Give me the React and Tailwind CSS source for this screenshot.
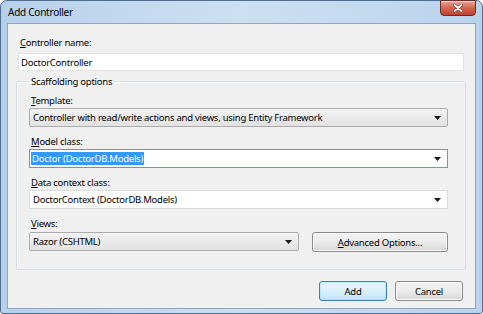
export default function App() {
  const font = "font-['Segoe_UI','Noto_Sans',sans-serif] text-[9.5px] tracking-[-0.25px] leading-[15px] text-black";

  const Arrow = () => (
    <svg width="7" height="4" viewBox="0 0 7 4" className="shrink-0">
      <path d="M0 0 H7 L3.5 4 Z" fill="#1a1a1a" />
    </svg>
  );

  return (
    <div className={`w-[483px] h-[314px] flex flex-col rounded-t-[7px] rounded-b-[3px] border border-[#4f6e91] bg-gradient-to-r from-[#b7d0ea] via-[#cde0f2] to-[#bad3ec] px-[6px] pb-[4px] ${font}`}>
      {/* title bar */}
      <div className="h-[22px] shrink-0 flex items-start justify-between">
        <span className="pl-[1px] pt-[4px] text-[10px]">Add Controller</span>
        <button className="w-[36px] h-[16px] -mt-[1px] flex items-center justify-center rounded-b-[4px] border border-[#6b2c24] bg-gradient-to-b from-[#e9a898] via-[#d26450] to-[#c2402c] shadow-[inset_0_1px_0_rgba(255,255,255,0.5)]">
          <svg width="10" height="8" viewBox="0 0 10 8">
            <path d="M1.5 1 L8.5 7 M8.5 1 L1.5 7" stroke="#7a3a30" strokeWidth="3" strokeLinecap="round" />
            <path d="M1.5 1 L8.5 7 M8.5 1 L1.5 7" stroke="#ffffff" strokeWidth="1.8" strokeLinecap="round" />
          </svg>
        </button>
      </div>

      {/* client area */}
      <div className="flex-1 flex flex-col bg-[#f0f0f0] border border-[#8ea7c3]">
        <div className="pl-[12px] pt-[11px]">
          <span className="underline">C</span>ontroller name:
        </div>
        <input
          readOnly
          value="DoctorController"
          className="mt-[3px] ml-[10px] mr-[11px] h-[18px] px-[2px] bg-white border border-[#e3e3e3] outline-none"
        />

        <fieldset className="mt-[3px] ml-[8px] mr-[9px] border border-[#d5dfe5] rounded-[2px] pl-[12px] pr-[17px] pb-[17px] shadow-[inset_1px_1px_0_#fff]">
          <legend className="ml-[1px] px-[1px]">Scaffolding options</legend>

          <div className="pl-[2px] mt-[4px]">
            <span className="underline">T</span>emplate:
          </div>
          <div className="h-[19px] flex items-center justify-between px-[3px] pr-[6px] border border-[#acacac] rounded-[2px] bg-gradient-to-b from-[#f2f2f2] to-[#e2e2e2]">
            <span>Controller with read/write actions and views, using Entity Framework</span>
            <Arrow />
          </div>

          <div className="pl-[2px] mt-[7px]">
            <span className="underline">M</span>odel class:
          </div>
          <div className="h-[19px] flex items-center justify-between pl-[1px] pr-[6px] border border-[#5b9bd9] bg-white">
            <span className="bg-[#3399ff] text-white px-[1px] leading-[13px]">Doctor (DoctorDB.Models)</span>
            <Arrow />
          </div>

          <div className="pl-[2px] mt-[7px]">
            <span className="underline">D</span>ata context class:
          </div>
          <div className="h-[19px] flex items-center justify-between px-[3px] pr-[6px] border border-[#dcdcdc] bg-white">
            <span>DoctorContext (DoctorDB.Models)</span>
            <Arrow />
          </div>

          <div className="pl-[2px] mt-[7px]">
            <span className="underline">V</span>iews:
          </div>
          <div className="flex items-center justify-between">
            <div className="w-[270px] h-[19px] flex items-center justify-between px-[3px] pr-[6px] border border-[#acacac] rounded-[2px] bg-gradient-to-b from-[#f2f2f2] to-[#e2e2e2]">
              <span>Razor (CSHTML)</span>
              <Arrow />
            </div>
            <button className="w-[136px] h-[20px] mt-[1px] border border-[#8a8a8a] rounded-[3px] bg-gradient-to-b from-[#f4f4f4] via-[#ebebeb] to-[#d6d6d6] shadow-[inset_0_0_0_1px_#fcfcfc]">
              <span className="underline">A</span>dvanced Options...
            </button>
          </div>
        </fieldset>

        <div className="mt-[11px] mr-[12px] flex justify-end gap-[8px]">
          <button className="w-[68px] h-[20px] border border-[#3c7fb1] rounded-[3px] bg-gradient-to-b from-[#eaf6fd] via-[#d9f0fc] to-[#bee6fd] shadow-[inset_0_0_0_1px_#48d7fb40]">
            Add
          </button>
          <button className="w-[68px] h-[20px] border border-[#8a8a8a] rounded-[3px] bg-gradient-to-b from-[#f4f4f4] via-[#ebebeb] to-[#d6d6d6] shadow-[inset_0_0_0_1px_#fcfcfc]">
            Cancel
          </button>
        </div>
      </div>
    </div>
  );
}
